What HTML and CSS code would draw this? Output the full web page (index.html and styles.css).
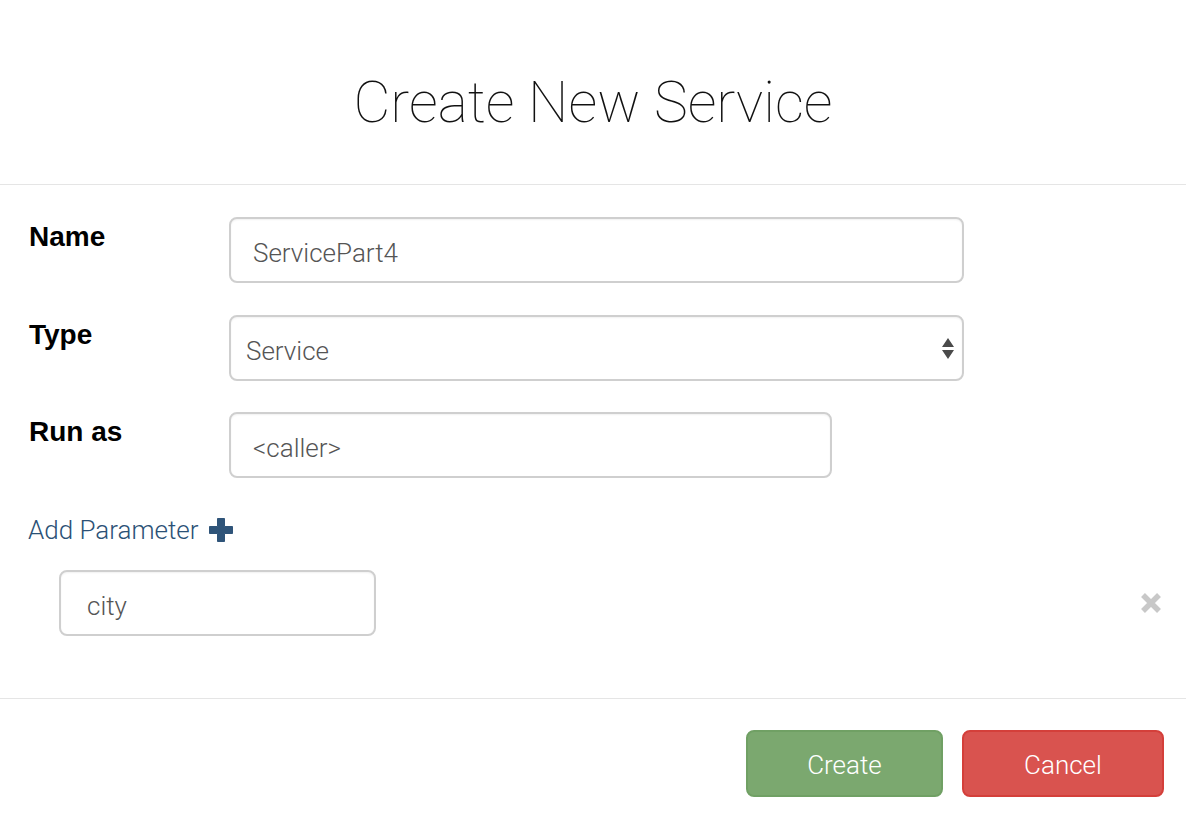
FILE: index.html
```html
<!DOCTYPE html>
<html lang="en">
<head>
<meta charset="utf-8">
<title>Create New Service</title>
<link rel="stylesheet" href="styles.css">
</head>
<body>
<div class="modal">
  <header class="modal-header">
    <h1 class="modal-title">Create New Service</h1>
  </header>
  <div class="modal-body">
    <div class="form-row">
      <label class="form-label">Name</label>
      <div class="control control-wide"><span class="control-text">ServicePart4</span></div>
    </div>
    <div class="form-row">
      <label class="form-label">Type</label>
      <div class="control control-wide control-select">
        <span class="control-text">Service</span>
        <svg class="select-arrows" width="12" height="24" viewBox="0 0 12 24"><path d="M6 1 L12 10 L0 10 Z M0 13 L12 13 L6 22 Z" fill="#4a4a4a"/></svg>
      </div>
    </div>
    <div class="form-row">
      <label class="form-label">Run as</label>
      <div class="control control-mid"><span class="control-text">&lt;caller&gt;</span></div>
    </div>
    <a class="add-param">Add Parameter
      <svg class="plus-icon" width="26" height="26" viewBox="0 0 26 26"><path d="M9.5 1.5 H16.5 V9.5 H24.5 V16.5 H16.5 V24.5 H9.5 V16.5 H1.5 V9.5 H9.5 Z" fill="#2f5479" stroke="#2f5479" stroke-width="1" stroke-linejoin="round"/></svg>
    </a>
    <div class="param-row">
      <div class="control control-param"><span class="control-text">city</span></div>
      <svg class="remove-icon" width="22" height="22" viewBox="0 0 22 22"><path d="M3 3 L19 19 M19 3 L3 19" stroke="#c8c8c8" stroke-width="5.5" stroke-linecap="butt"/></svg>
    </div>
  </div>
  <footer class="modal-footer">
    <button class="btn btn-success">Create</button>
    <button class="btn btn-danger">Cancel</button>
  </footer>
</div>
</body>
</html>
```
FILE: styles.css
```css
html, body {
  margin: 0;
  padding: 0;
  background: #fff;
}
body {
  font-family: Roboto, "Liberation Sans", sans-serif;
  color: #333;
}
.modal {
  width: 1186px;
  height: 820px;
  display: flex;
  flex-direction: column;
}
.modal-header {
  height: 185px;
  box-sizing: border-box;
  padding-top: 73px;
  border-bottom: 1px solid #e5e5e5;
  text-align: center;
}
.modal-title {
  margin: 0;
  font-family: Roboto, sans-serif;
  font-weight: 100;
  font-size: 57px;
  line-height: 59px;
  color: #111;
  letter-spacing: 0;
}
.modal-body {
  padding: 32px 24px 62px 29px;
  display: flex;
  flex-direction: column;
  border-bottom: 1px solid #e5e5e5;
}
.form-row {
  display: flex;
  align-items: flex-start;
  margin-bottom: 32px;
}
.form-row:nth-child(3) {
  margin-bottom: 0;
}
.form-row:nth-child(2) {
  margin-bottom: 31px;
}
.form-label {
  width: 200px;
  flex: none;
  font-family: "Liberation Sans", Arial, sans-serif;
  font-weight: bold;
  font-size: 28px;
  line-height: 37px;
  color: #000;
  margin-top: 1px;
}
.control {
  box-sizing: border-box;
  height: 66px;
  border: 2px solid #cfcfcf;
  border-radius: 8px;
  background: #fff;
  box-shadow: inset 0 1px 2px rgba(0,0,0,0.06);
  display: flex;
  align-items: center;
  padding: 5px 22px 0 22px;
  font-family: Roboto, sans-serif;
  font-weight: 300;
  font-size: 26px;
  color: #555;
}
.control-wide { width: 735px; }
.control-mid { width: 603px; }
.control-select {
  justify-content: space-between;
  padding-left: 15px;
  padding-right: 8px;
}
.select-arrows { flex: none; margin-top: -4px; }
.control-param {
  width: 317px;
  padding-left: 26px;
}
.add-param {
  margin-top: 34px;
  display: flex;
  align-items: center;
  gap: 9px;
  font-family: Roboto, sans-serif;
  font-weight: 300;
  font-size: 26px;
  line-height: 37px;
  color: #2b5176;
  letter-spacing: 0;
  margin-left: -1px;
  cursor: pointer;
}
.plus-icon {
  flex: none;
  margin-top: -2px;
}
.param-row {
  margin-top: 21px;
  padding-left: 30px;
  display: flex;
  justify-content: space-between;
  align-items: center;
}
.remove-icon {
  flex: none;
  margin-right: 0;
}
.modal-footer {
  padding: 31px 22px 0 0;
  display: flex;
  justify-content: flex-end;
  gap: 19px;
}
.btn {
  box-sizing: border-box;
  height: 67px;
  border-radius: 8px;
  font-family: Roboto, sans-serif;
  font-weight: 300;
  font-size: 26px;
  color: #fff;
  padding: 2px 0 0 0;
  cursor: pointer;
}
.btn-success {
  width: 197px;
  background: #7ba86f;
  border: 2px solid #70a064;
}
.btn-danger {
  width: 202px;
  background: #d9534f;
  border: 2px solid #d43f3a;
}
```
